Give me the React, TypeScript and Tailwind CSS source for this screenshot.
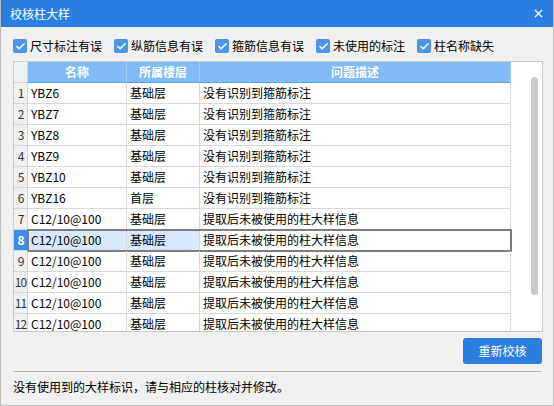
import { Check, X } from "lucide-react";

const filters = ["尺寸标注有误", "纵筋信息有误", "箍筋信息有误", "未使用的标注", "柱名称缺失"];

const rows = [
  { name: "YBZ6", floor: "基础层", desc: "没有识别到箍筋标注" },
  { name: "YBZ7", floor: "基础层", desc: "没有识别到箍筋标注" },
  { name: "YBZ8", floor: "基础层", desc: "没有识别到箍筋标注" },
  { name: "YBZ9", floor: "基础层", desc: "没有识别到箍筋标注" },
  { name: "YBZ10", floor: "基础层", desc: "没有识别到箍筋标注" },
  { name: "YBZ16", floor: "首层", desc: "没有识别到箍筋标注" },
  { name: "C12/10@100", floor: "基础层", desc: "提取后未被使用的柱大样信息" },
  { name: "C12/10@100", floor: "基础层", desc: "提取后未被使用的柱大样信息" },
  { name: "C12/10@100", floor: "基础层", desc: "提取后未被使用的柱大样信息" },
  { name: "C12/10@100", floor: "基础层", desc: "提取后未被使用的柱大样信息" },
  { name: "C12/10@100", floor: "基础层", desc: "提取后未被使用的柱大样信息" },
  { name: "C12/10@100", floor: "基础层", desc: "提取后未被使用的柱大样信息" },
];

const SELECTED = 8;

export default function App() {
  return (
    <div
      className="w-[554px] h-[406px] bg-[#f0f0f0] border-x border-b border-[#bcbcbc] flex flex-col text-[12px] text-black overflow-hidden"
      style={{ fontFamily: '"Noto Sans CJK SC", "Noto Sans", sans-serif' }}
    >
      {/* title bar */}
      <div className="h-[27px] shrink-0 bg-[#2c7ee0] flex items-center justify-between pl-[9px] pr-[8px] text-white">
        <span className="text-[12px]">校核柱大样</span>
        <X className="w-[13px] h-[13px]" strokeWidth={2.2} />
      </div>

      {/* filters */}
      <div className="flex items-center gap-[12px] pl-[12px] mt-[11px] h-[16px]">
        {filters.map((f) => (
          <label key={f} className="flex items-center gap-[3px] leading-none">
            <span className="w-[14px] h-[14px] rounded-[2px] bg-[#4f95e5] flex items-center justify-center">
              <Check className="w-[11px] h-[11px] text-white" strokeWidth={3} />
            </span>
            <span>{f}</span>
          </label>
        ))}
      </div>

      {/* table */}
      <div className="ml-[12px] mt-[7px] w-[530px] h-[271px] border border-[#c8c8c8] bg-white flex overflow-hidden">
        <div className="w-[497px] flex flex-col">
          <div className="flex h-[21px] shrink-0 text-white font-bold leading-[20px]">
            <div className="w-[14px] bg-[#f0f0f0] border-r border-b border-[#d4d4d4]" />
            <div className="w-[99px] bg-[#80bbf7] border-r border-b border-r-[#a3cdf7] border-b-[#62a3ee] text-center">名称</div>
            <div className="w-[73px] bg-[#80bbf7] border-r border-b border-r-[#a3cdf7] border-b-[#62a3ee] text-center">所属楼层</div>
            <div className="w-[311px] bg-[#80bbf7] border-r border-b border-r-[#a3cdf7] border-b-[#62a3ee] text-center">问题描述</div>
          </div>
          {rows.map((r, i) => {
            const n = i + 1;
            const sel = n === SELECTED;
            return (
              <div key={n} className="flex h-[21px] shrink-0 leading-[20px]">
                <div
                  className={
                    sel
                      ? "w-[14px] bg-[#3f8de6] text-white font-bold border-r border-b border-[#d4d4d4] text-center tracking-[-1px]"
                      : "w-[14px] bg-[#f0f0f0] text-[#333] border-r border-b border-[#d4d4d4] text-center tracking-[-1px]"
                  }
                >
                  {n}
                </div>
                <div className={sel ? "flex outline-2 outline-[#7d7d7d] -outline-offset-1" : "flex"}>
                  <div className={`w-[99px] pl-[3px] border-r border-b border-[#d8d8d8] ${sel ? "bg-[#d8e9fb]" : ""}`}>{r.name}</div>
                  <div className={`w-[73px] pl-[3px] border-r border-b border-[#d8d8d8] ${sel ? "bg-[#d8e9fb]" : ""}`}>{r.floor}</div>
                  <div className="w-[311px] pl-[3px] border-r border-b border-[#d8d8d8]">{r.desc}</div>
                </div>
              </div>
            );
          })}
        </div>
        <div className="w-[31px] pl-[20px] pt-[15px]">
          <div className="w-[7px] h-[218px] rounded-full bg-[#c9c9c9]" />
        </div>
      </div>

      {/* button */}
      <div className="flex justify-end pr-[11px] mt-[6px]">
        <button className="w-[79px] h-[26px] rounded-[3px] bg-[#2c7ee0] text-white text-[12px]">重新校核</button>
      </div>

      <div className="mx-[12px] mt-[7px] h-px bg-[#b4b4b4]" />

      <div className="pl-[12px] mt-[7px] leading-[16px]">没有使用到的大样标识，请与相应的柱核对并修改。</div>
    </div>
  );
}
